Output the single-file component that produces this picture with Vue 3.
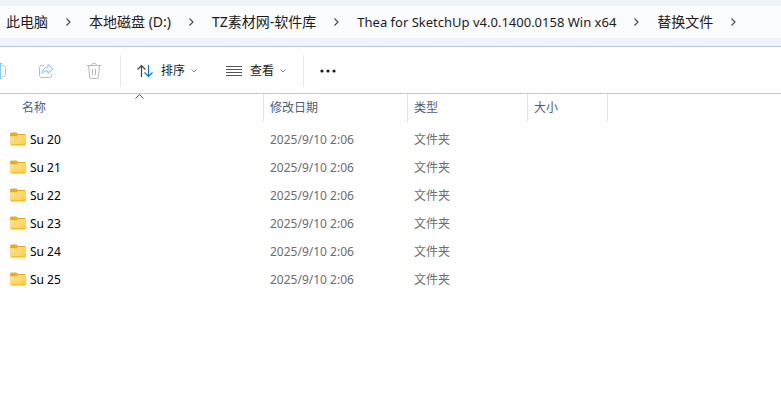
<script setup>
const crumbs = [
  { text: '此电脑' },
  { text: '本地磁盘 (D:)' },
  { text: 'TZ素材网-软件库' },
  { text: 'Thea for SketchUp v4.0.1400.0158 Win x64', latin: true },
  { text: '替换文件' },
]
const folders = ['Su 20', 'Su 21', 'Su 22', 'Su 23', 'Su 24', 'Su 25'].map((name) => ({
  name,
  modified: '2025/9/10 2:06',
  type: '文件夹',
}))
</script>

<template>
  <div class="explorer">
    <nav class="address" aria-label="地址">
      <ol class="crumbs">
        <li v-for="crumb in crumbs" :key="crumb.text" class="crumb">
          <a href="#" :class="{ latin: crumb.latin }">{{ crumb.text }}</a>
          <svg class="sep" width="5" height="8" viewBox="0 0 5 8" aria-hidden="true">
            <path d="M.5.5L4 4 .5 7.500" fill="none" stroke="#444" stroke-width="1.100" />
          </svg>
        </li>
      </ol>
    </nav>

    <div class="toolbar" role="toolbar" aria-label="命令">
      <div class="group file-group">
        <button type="button" class="tool rename" aria-label="重命名">
          <svg width="16" height="18" viewBox="0 0 16 18" fill="none">
            <path d="M7 3.500H2.500a2 2 0 0 0-2 2v7a2 2 0 0 0 2 2H7M12 3.500h1.500a2 2 0 0 1 2 2v7a2 2 0 0 1-2 2H12" stroke="#c4c4c4" />
            <path d="M8 1.500h4M8 16.500h4M10.500 1.500v15" stroke="#8ec5ee" />
          </svg>
        </button>
        <button type="button" class="tool" aria-label="共享">
          <svg width="16" height="16" viewBox="0 0 16 16" fill="none" stroke-linejoin="round">
            <path d="M6 2.500H3.500a2 2 0 0 0-2 2v8a2 2 0 0 0 2 2h8a2 2 0 0 0 2-2V11" stroke="#bdbdbd" />
            <path d="M10 1.500l5 4.500-5 4.500V8C7.500 7.800 5.500 8.600 4 10.500 4.300 6.800 6.300 4.300 10 4z" fill="#eef7fd" stroke="#8ec5ee" />
          </svg>
        </button>
        <button type="button" class="tool" aria-label="删除">
          <svg width="16" height="18" viewBox="0 0 16 18" fill="none" stroke="#b8b8b8">
            <path d="M1 3.500h14M5.500 3.500c0-3 5-3 5 0M2.500 3.500l1.200 11.500a1.500 1.500 0 0 0 1.500 1.500h5.600a1.500 1.500 0 0 0 1.500-1.500l1.200-11.500M6.500 7v6M9.500 7v6" />
          </svg>
        </button>
      </div>
      <div class="group view-group">
        <button type="button" class="tool">
          <svg width="16" height="14" viewBox="0 0 16 14" fill="none" stroke-width="1.200">
            <path d="M4.500 13V1.500M.500 5.500l4-4 4 4" stroke="#444" />
            <path d="M11.500 1v11.500M7.500 8.500l4 4 4-4" stroke="#0078d4" />
          </svg>
          <span class="label">排序</span>
          <svg class="drop" width="7" height="4" viewBox="0 0 7 4"><path d="M.5.5l2.500 2.500L5.500.5" fill="none" stroke="#888" /></svg>
        </button>
        <button type="button" class="tool">
          <svg width="16" height="12" viewBox="0 0 16 12"><path d="M0 1.500h16M0 4.500h16M0 7.500h16M0 10.500h16" stroke="#555" /></svg>
          <span class="label">查看</span>
          <svg class="drop" width="7" height="4" viewBox="0 0 7 4"><path d="M.5.5l2.500 2.500L5.500.5" fill="none" stroke="#888" /></svg>
        </button>
      </div>
      <button type="button" class="tool more" aria-label="查看更多">
        <svg width="16" height="4" viewBox="0 0 16 4" fill="#1b1b1b">
          <circle cx="2" cy="2" r="1.600" /><circle cx="8" cy="2" r="1.600" /><circle cx="14" cy="2" r="1.600" />
        </svg>
      </button>
    </div>

    <table class="files">
      <colgroup>
        <col class="c-name" /><col class="c-date" /><col class="c-type" /><col class="c-size" /><col />
      </colgroup>
      <thead>
        <tr>
          <th scope="col" class="sorted" aria-sort="ascending">
            名称
            <svg class="caret" width="9" height="5" viewBox="0 0 9 5" aria-hidden="true"><path d="M.5 4.500l4-4 4 4" fill="none" stroke="#555" /></svg>
          </th>
          <th scope="col">修改日期</th>
          <th scope="col">类型</th>
          <th scope="col">大小</th>
          <td></td>
        </tr>
      </thead>
      <tbody>
        <tr v-for="(folder, index) in folders" :key="folder.name">
          <td class="name">
            <div class="entry">
              <svg class="folder" width="16" height="14" viewBox="0 0 16 14" aria-hidden="true">
                <defs>
                  <linearGradient :id="`folder-front-${index}`" x1="0" y1="0" x2="1" y2="1">
                    <stop offset="0" stop-color="#ffe499" /><stop offset="1" stop-color="#ffcb45" />
                  </linearGradient>
                </defs>
                <path d="M0 2a1.500 1.500 0 0 1 1.500-1.500h5L8 2h6.500A1.500 1.500 0 0 1 16 3.500V7H0z" fill="#efad0c" />
                <path d="M0 4.200h6.500L8 3.100h8v9a1.200 1.200 0 0 1-1.200 1.200H1.200A1.200 1.200 0 0 1 0 12.100z" :fill="`url(#folder-front-${index})`" />
                <path d="M1 12.900h14" stroke="#e5a51c" stroke-width=".8" />
              </svg>
              <span>{{ folder.name }}</span>
            </div>
          </td>
          <td>{{ folder.modified }}</td>
          <td>{{ folder.type }}</td>
          <td></td>
          <td></td>
        </tr>
      </tbody>
    </table>
  </div>
</template>

<style>
body {
  background: #fff;
}
</style>

<style scoped>
.explorer {
  font: 12px/16px "Noto Sans", "Noto Sans CJK SC", sans-serif;
  color: #1b1b1b;
  overflow: hidden;
}
.address {
  padding: 6px 0 8px;
  background: #eff4f8;
  border-bottom: 1px solid #b5ccd8;
}
.crumbs {
  display: flex;
  align-items: center;
  height: 32px;
  margin: 0;
  padding: 0 0 0 6px;
  list-style: none;
  background: #fbfcfe;
  font-size: 14px;
  line-height: 20px;
  white-space: nowrap;
}
.crumb {
  display: flex;
  align-items: center;
}
.crumb a {
  color: inherit;
  text-decoration: none;
}
.crumb .latin {
  font-size: 13px;
}
.sep {
  margin: 0 18px;
}
.toolbar {
  display: flex;
  align-items: center;
  padding: 8px 0 6px;
  border-bottom: 1px solid #b9cbd3;
}
.group {
  display: flex;
  align-items: center;
  height: 32px;
  border-right: 1px solid #e8e8e8;
}
.file-group {
  gap: 32px;
  padding-right: 18px;
}
.view-group {
  gap: 28px;
  padding: 0 16px;
}
.tool {
  display: flex;
  align-items: center;
  padding: 0;
  border: 0;
  background: none;
  color: inherit;
  font: inherit;
}
.rename {
  margin-left: -10px;
}
.label {
  margin-left: 8px;
}
.drop {
  margin-left: 6px;
}
.more {
  margin-left: 16px;
}
.files {
  width: 100%;
  table-layout: fixed;
  border-collapse: separate;
  border-spacing: 0;
}
.c-name {
  width: 264px;
}
.c-date {
  width: 144px;
}
.c-type {
  width: 120px;
}
.c-size {
  width: 80px;
}
th {
  position: relative;
  height: 28px;
  padding: 0 0 0 6px;
  border-right: 1px solid #e2e2e2;
  color: #4c607a;
  font-weight: 400;
  text-align: left;
}
.sorted {
  padding-left: 22px;
}
.caret {
  position: absolute;
  top: 0;
  left: 135px;
}
tbody::before {
  content: "";
  display: block;
  height: 4px;
}
td {
  height: 28px;
  padding: 0 0 0 6px;
  color: #6d6d6d;
}
.name {
  padding-left: 10px;
  color: #000;
}
.entry {
  display: flex;
  align-items: center;
  gap: 4px;
}
.folder {
  margin-bottom: 2px;
}
</style>
